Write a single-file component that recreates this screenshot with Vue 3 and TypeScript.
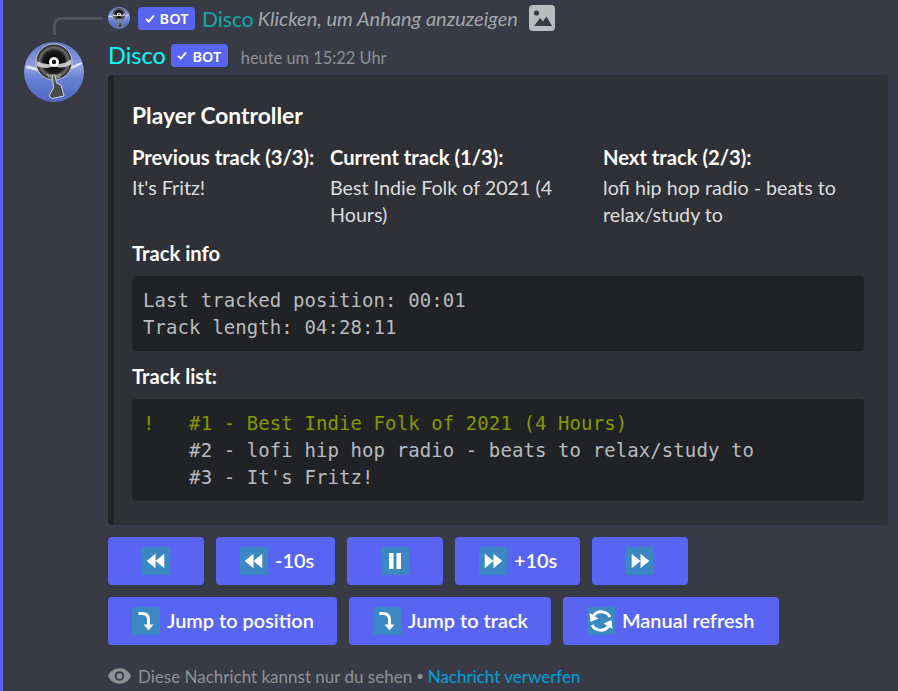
<script setup lang="ts">
type IconName = 'rewind' | 'forward' | 'pause' | 'jump' | 'refresh'

interface ControlButton {
  icon: IconName
  label?: string
}

const playbackButtons: ControlButton[] = [
  { icon: 'rewind' },
  { icon: 'rewind', label: '-10s' },
  { icon: 'pause' },
  { icon: 'forward', label: '+10s' },
  { icon: 'forward' }
]

const actionButtons: ControlButton[] = [
  { icon: 'jump', label: 'Jump to position' },
  { icon: 'jump', label: 'Jump to track' },
  { icon: 'refresh', label: 'Manual refresh' }
]

const buttonRows = [playbackButtons, actionButtons]

const fields = [
  { name: 'Previous track (3/3):', value: "It's Fritz!" },
  { name: 'Current track (1/3):', value: 'Best Indie Folk of 2021 (4 Hours)' },
  { name: 'Next track (2/3):', value: 'lofi hip hop radio - beats to relax/study to' }
]
</script>

<template>
  <div class="message">
    <div class="spine"></div>

    <div class="reply">
      <svg class="avatar-small" viewBox="0 0 60 60"><use href="#disco-avatar" /></svg>
      <span class="bot-tag">
        <svg class="check" viewBox="0 0 10 9"><path d="M1 4.800 L3.800 7.600 L9 1.400" fill="none" stroke="#fff" stroke-width="1.900" /></svg>BOT
      </span>
      <span class="reply-name">Disco</span>
      <em class="reply-text">Klicken, um Anhang anzuzeigen</em>
      <svg class="image-icon" viewBox="0 0 26 26">
        <rect width="26" height="26" rx="4" fill="#b9bbbe" />
        <circle cx="7.500" cy="8" r="2.600" fill="#36393f" />
        <path d="M5 21 L11 13 L14 16.500 L17.500 11.500 L23 21 Z" fill="#36393f" />
      </svg>
    </div>

    <div class="body">
      <svg class="avatar" viewBox="0 0 60 60">
        <defs>
          <linearGradient id="avatar-bg" x1="0" y1="0" x2="0" y2="1">
            <stop offset="0" stop-color="#5f78cc" />
            <stop offset="0.42" stop-color="#8fa1e0" />
            <stop offset="0.62" stop-color="#667fd2" />
            <stop offset="1" stop-color="#4f69c2" />
          </linearGradient>
          <radialGradient id="avatar-disc" cx="0.5" cy="0.5" r="0.5">
            <stop offset="0" stop-color="#f4f4f4" />
            <stop offset="0.24" stop-color="#f4f4f4" />
            <stop offset="0.3" stop-color="#090909" />
            <stop offset="0.62" stop-color="#1c1c1c" />
            <stop offset="0.8" stop-color="#6d6d6d" />
            <stop offset="1" stop-color="#121212" />
          </radialGradient>
          <g id="disco-avatar">
            <circle cx="30" cy="30" r="30" fill="url(#avatar-bg)" />
            <path d="M3 23 Q20 29 30 27 Q44 27 57 20 L58 22 Q44 30 30 30 Q16 31 2 26 Z" fill="#f1f4fc" opacity="0.8" />
            <circle cx="30" cy="20" r="18" fill="url(#avatar-disc)" stroke="#e8e8e8" stroke-width="0.800" />
            <path d="M12.500 19 Q22 24 30 21 Q38 24 47.500 17 L47.500 22 Q38 28 30 24 Q22 28 13 24 Z" fill="#dedede" opacity="0.85" />
            <path d="M22 31 Q30 35 38 31 L36 36 Q30 38 24 36 Z" fill="#9a9a9a" opacity="0.7" />
            <circle cx="30" cy="20" r="4.600" fill="#fff" />
            <circle cx="30" cy="20" r="2.200" fill="#111" />
            <path d="M28.500 33 L31 33 L32.500 41 L37 43 L40 54 L28 56.500 L25 54 L29.500 46 Z" fill="#4a4a4a" stroke="#e0e0e0" stroke-width="0.900" />
          </g>
        </defs>
        <use href="#disco-avatar" />
      </svg>

      <div class="content">
        <div class="header">
          <span class="name">Disco</span>
          <span class="bot-tag">
            <svg class="check" viewBox="0 0 10 9"><path d="M1 4.800 L3.800 7.600 L9 1.400" fill="none" stroke="#fff" stroke-width="1.900" /></svg>BOT
          </span>
          <span class="timestamp">heute um 15:22 Uhr</span>
        </div>

        <div class="embed">
          <div class="embed-title">Player Controller</div>

          <div class="fields">
            <div v-for="field in fields" :key="field.name">
              <div class="field-name">{{ field.name }}</div>
              <div class="field-value">{{ field.value }}</div>
            </div>
          </div>

          <div class="field-name section-name">Track info</div>
          <pre class="code">Last tracked position: 00:01
Track length: 04:28:11</pre>

          <div class="field-name section-name">Track list:</div>
          <pre class="code"><span class="code-active">!   #1 - Best Indie Folk of 2021 (4 Hours)</span>
    #2 - lofi hip hop radio - beats to relax/study to
    #3 - It's Fritz!</pre>
        </div>

        <div class="controls">
          <div v-for="(row, rowIndex) in buttonRows" :key="rowIndex" class="button-row">
            <button
              v-for="(button, index) in row"
              :key="index"
              class="control"
              :class="{ 'icon-only': !button.label }"
            >
              <span class="emoji">
                <svg viewBox="0 0 28 28" width="28" height="28">
                  <template v-if="button.icon === 'rewind'">
                    <path d="M13.500 6.700 V21.300 L4.700 14 Z M22.300 6.700 V21.300 L13.500 14 Z" fill="#fff" />
                  </template>
                  <template v-else-if="button.icon === 'forward'">
                    <path d="M5.700 6.700 V21.300 L14.500 14 Z M14.500 6.700 V21.300 L23.300 14 Z" fill="#fff" />
                  </template>
                  <template v-else-if="button.icon === 'pause'">
                    <path d="M8 6 H12.500 V22 H8 Z M15.500 6 H20 V22 H15.500 Z" fill="#fff" />
                  </template>
                  <template v-else-if="button.icon === 'jump'">
                    <path d="M6.500 6.500 H10 Q16.500 6.500 16.500 12.500 V20" fill="none" stroke="#fff" stroke-width="3" />
                    <path d="M11.500 17.500 L16.500 23.500 L21.500 17.500 Z" fill="#fff" />
                  </template>
                  <template v-else>
                    <path d="M23 10 A10 10 0 0 0 6.500 8.500" fill="none" stroke="#fff" stroke-width="3" />
                    <path d="M2.500 6 L3.500 15 L11.500 11.500 Z" fill="#fff" />
                    <path d="M5 18 A10 10 0 0 0 21.500 19.500" fill="none" stroke="#fff" stroke-width="3" />
                    <path d="M25.500 22 L24.500 13 L16.500 16.500 Z" fill="#fff" />
                  </template>
                </svg>
              </span>
              <span v-if="button.label" class="control-label">{{ button.label }}</span>
            </button>
          </div>
        </div>

        <div class="notice">
          <svg class="eye" viewBox="0 0 24 16" width="23" height="16">
            <path
              d="M12 0 C6.500 0 2 3.300 0 8 C2 12.700 6.500 16 12 16 C17.500 16 22 12.700 24 8 C22 3.300 17.500 0 12 0 Z M12 13 A5 5 0 1 1 12 3 A5 5 0 0 1 12 13 Z M12 5 A3 3 0 1 0 12 11 A3 3 0 0 0 12 5 Z"
              fill="#8e9297"
              fill-rule="evenodd"
            />
          </svg>
          <span>Diese Nachricht kannst nur du sehen</span>
          <span class="dot">•</span>
          <a class="dismiss" href="#">Nachricht verwerfen</a>
        </div>
      </div>
    </div>
  </div>
</template>

<style>
html,
body {
  background: #383b45;
  overflow: hidden;
}
</style>

<style scoped>
.message {
  position: relative;
  box-sizing: border-box;
  width: 898px;
  height: 691px;
  overflow: hidden;
  border-left: 3px solid #5865f2;
  background: #383b45;
  color: #dcddde;
  font-family: Lato, 'Noto Sans', sans-serif;
}

.spine {
  position: absolute;
  left: 50px;
  top: 17px;
  width: 50px;
  height: 18px;
  box-sizing: border-box;
  border-left: 3px solid #4f545c;
  border-top: 3px solid #4f545c;
  border-top-left-radius: 8px;
}

.reply {
  display: flex;
  align-items: center;
  height: 36px;
  padding-left: 105px;
  white-space: nowrap;
}

.avatar-small {
  width: 22px;
  height: 22px;
  margin-right: 8px;
}

.bot-tag {
  display: inline-flex;
  align-items: center;
  justify-content: center;
  width: 57px;
  height: 23px;
  border-radius: 4px;
  background: #5865f2;
  color: #fff;
  font-size: 14.5px;
  font-weight: 600;
  font-family: 'Noto Sans', sans-serif;
}

.check {
  width: 10px;
  height: 9px;
  margin-right: 5px;
}

.reply-name {
  margin-left: 7px;
  color: #13a8a8;
  font-size: 21px;
}

.reply-text {
  margin-left: 4px;
  color: #a3a6aa;
  font-size: 20px;
}

.image-icon {
  width: 26px;
  height: 26px;
  margin-left: 11px;
}

.body {
  display: flex;
  gap: 24px;
  padding-left: 21px;
}

.avatar {
  flex: none;
  width: 60px;
  height: 60px;
  margin-top: 6px;
}

.content {
  display: flex;
  flex-direction: column;
  width: 780px;
}

.header {
  display: flex;
  align-items: center;
  height: 39px;
  white-space: nowrap;
}

.name {
  margin-right: 5px;
  padding-bottom: 2px;
  color: #00ffff;
  font-size: 23.5px;
}

.timestamp {
  margin-left: 13px;
  padding-top: 4px;
  color: #8e9297;
  font-size: 16.4px;
}

.embed {
  box-sizing: border-box;
  height: 450px;
  padding: 24px 24px 24px 18px;
  border-left: 6px solid #202225;
  border-radius: 4px;
  background: #2f3136;
}

.embed-title {
  height: 34px;
  line-height: 32px;
  color: #fff;
  font-size: 22.8px;
  font-weight: 700;
}

.fields {
  display: grid;
  grid-template-columns: 198px 273px 261px;
  margin-top: 12px;
}

.field-name {
  height: 27px;
  line-height: 25px;
  color: #fff;
  font-size: 20.2px;
  font-weight: 700;
  white-space: nowrap;
}

.field-value {
  margin: 2px 0 1px;
  line-height: 27px;
  color: #dcddde;
  font-size: 19.7px;
}

.section-name {
  margin-top: 12px;
}

.code {
  box-sizing: border-box;
  margin: 8px 0 0;
  padding: 10.5px 11px;
  border-radius: 4px;
  background: #202225;
  color: #b9bbbe;
  font-family: 'DejaVu Sans Mono', monospace;
  font-size: 19px;
  line-height: 27px;
  letter-spacing: 0.09px;
}

.code + .section-name {
  margin-top: 13px;
}

.code-active {
  color: #859900;
}

.controls {
  display: flex;
  flex-direction: column;
  gap: 12px;
  margin-top: 12px;
}

.button-row {
  display: flex;
  gap: 12px;
}

.control {
  display: flex;
  flex: none;
  align-items: center;
  gap: 7px;
  box-sizing: border-box;
  height: 48px;
  padding: 0 0 0 24px;
  border: none;
  border-radius: 4px;
  background: #5865f2;
  color: #fff;
  font-family: Lato, 'Noto Sans', sans-serif;
  font-size: 19.9px;
  font-weight: 600;
  white-space: nowrap;
}

.control-label {
  margin-top: -2px;
}

.button-row:first-child .control:nth-child(2) {
  width: 119px;
}

.button-row:first-child .control:nth-child(4) {
  width: 125px;
}

.button-row:last-child .control:nth-child(1) {
  width: 229px;
}

.button-row:last-child .control:nth-child(2) {
  width: 202px;
}

.button-row:last-child .control:nth-child(3) {
  width: 216px;
}

.control.icon-only {
  justify-content: center;
  width: 96px;
  padding: 0;
}

.emoji {
  display: block;
  width: 28px;
  height: 28px;
  border-radius: 2px;
  background: #3b88c3;
}

.emoji svg {
  display: block;
}

.notice {
  display: flex;
  align-items: center;
  height: 22px;
  margin-top: 20px;
  color: #8e9297;
  font-size: 17px;
  white-space: nowrap;
}

.eye {
  margin-right: 7px;
}

.dot {
  margin: 0 4px;
  font-size: 13px;
}

.dismiss {
  color: #00a0dc;
  text-decoration: none;
}
</style>
